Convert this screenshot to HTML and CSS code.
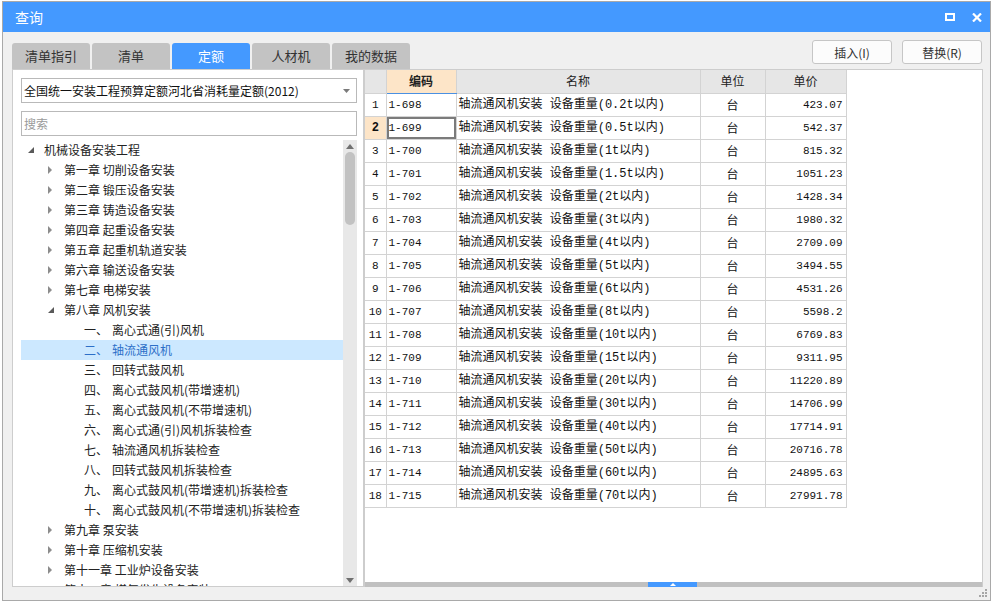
FILE: index.html
```html
<!DOCTYPE html>
<html lang="zh-CN">
<head>
<meta charset="utf-8">
<title>查询</title>
<link rel="stylesheet" href="styles.css">
</head>
<body>
<div class="dialog">
  <div class="titlebar">
    <span class="title">查询</span>
    <div class="winbtns">
      <svg width="10" height="8" viewBox="0 0 10 8"><rect x="1" y="1" width="8" height="6" fill="none" stroke="#fff" stroke-width="2"/></svg>
      <svg width="10" height="9" viewBox="0 0 10 9"><path d="M1 0.5 L9 8.5 M9 0.5 L1 8.5" stroke="#fff" stroke-width="2.2"/></svg>
    </div>
  </div>
  <div class="toolbar">
    <div class="tabs">
      <div class="tab">清单指引</div>
      <div class="tab">清单</div>
      <div class="tab active">定额</div>
      <div class="tab">人材机</div>
      <div class="tab">我的数据</div>
    </div>
    <div class="actions">
      <button class="btn">插入(I)</button>
      <button class="btn">替换(R)</button>
    </div>
  </div>
  <div class="main">
    <div class="leftpane">
      <div class="select">
        <span>全国统一安装工程预算定额河北省消耗量定额(2012)</span>
        <svg width="7" height="4" viewBox="0 0 7 4"><path d="M0 0 L7 0 L3.5 4 Z" fill="#7a7a7a"/></svg>
      </div>
      <div class="search">搜索</div>
      <div class="treewrap">
        <div class="tree">
          <div class="node l0"><span class="arr"><svg width="6" height="6" viewBox="0 0 6 6"><path d="M6 0 L6 6 L0 6 Z" fill="#5a5a5a"/></svg></span>机械设备安装工程</div>
          <div class="node l1"><span class="arr"><svg width="4" height="8" viewBox="0 0 4 8"><path d="M0 0 L4 4 L0 8 Z" fill="#8c8c8c"/></svg></span>第一章 切削设备安装</div>
          <div class="node l1"><span class="arr"><svg width="4" height="8" viewBox="0 0 4 8"><path d="M0 0 L4 4 L0 8 Z" fill="#8c8c8c"/></svg></span>第二章 锻压设备安装</div>
          <div class="node l1"><span class="arr"><svg width="4" height="8" viewBox="0 0 4 8"><path d="M0 0 L4 4 L0 8 Z" fill="#8c8c8c"/></svg></span>第三章 铸造设备安装</div>
          <div class="node l1"><span class="arr"><svg width="4" height="8" viewBox="0 0 4 8"><path d="M0 0 L4 4 L0 8 Z" fill="#8c8c8c"/></svg></span>第四章 起重设备安装</div>
          <div class="node l1"><span class="arr"><svg width="4" height="8" viewBox="0 0 4 8"><path d="M0 0 L4 4 L0 8 Z" fill="#8c8c8c"/></svg></span>第五章 起重机轨道安装</div>
          <div class="node l1"><span class="arr"><svg width="4" height="8" viewBox="0 0 4 8"><path d="M0 0 L4 4 L0 8 Z" fill="#8c8c8c"/></svg></span>第六章 输送设备安装</div>
          <div class="node l1"><span class="arr"><svg width="4" height="8" viewBox="0 0 4 8"><path d="M0 0 L4 4 L0 8 Z" fill="#8c8c8c"/></svg></span>第七章 电梯安装</div>
          <div class="node l1"><span class="arr"><svg width="6" height="6" viewBox="0 0 6 6"><path d="M6 0 L6 6 L0 6 Z" fill="#5a5a5a"/></svg></span>第八章 风机安装</div>
          <div class="node l2"><span class="num">一、</span>离心式通(引)风机</div>
          <div class="node l2 sel"><span class="num">二、</span>轴流通风机</div>
          <div class="node l2"><span class="num">三、</span>回转式鼓风机</div>
          <div class="node l2"><span class="num">四、</span>离心式鼓风机(带增速机)</div>
          <div class="node l2"><span class="num">五、</span>离心式鼓风机(不带增速机)</div>
          <div class="node l2"><span class="num">六、</span>离心式通(引)风机拆装检查</div>
          <div class="node l2"><span class="num">七、</span>轴流通风机拆装检查</div>
          <div class="node l2"><span class="num">八、</span>回转式鼓风机拆装检查</div>
          <div class="node l2"><span class="num">九、</span>离心式鼓风机(带增速机)拆装检查</div>
          <div class="node l2"><span class="num">十、</span>离心式鼓风机(不带增速机)拆装检查</div>
          <div class="node l1"><span class="arr"><svg width="4" height="8" viewBox="0 0 4 8"><path d="M0 0 L4 4 L0 8 Z" fill="#8c8c8c"/></svg></span>第九章 泵安装</div>
          <div class="node l1"><span class="arr"><svg width="4" height="8" viewBox="0 0 4 8"><path d="M0 0 L4 4 L0 8 Z" fill="#8c8c8c"/></svg></span>第十章 压缩机安装</div>
          <div class="node l1"><span class="arr"><svg width="4" height="8" viewBox="0 0 4 8"><path d="M0 0 L4 4 L0 8 Z" fill="#8c8c8c"/></svg></span>第十一章 工业炉设备安装</div>
          <div class="node l1"><span class="arr"><svg width="4" height="8" viewBox="0 0 4 8"><path d="M0 0 L4 4 L0 8 Z" fill="#8c8c8c"/></svg></span>第十二章 煤气发生设备安装</div>
        </div>
        <div class="vscroll">
          <svg class="varrow" width="8" height="5" viewBox="0 0 8 5"><path d="M0 5 L4 0 L8 5 Z" fill="#707070"/></svg>
          <div class="vthumb"></div>
          <div class="vfill"></div>
          <svg class="varrow" width="8" height="5" viewBox="0 0 8 5"><path d="M0 0 L8 0 L4 5 Z" fill="#707070"/></svg>
        </div>
      </div>
    </div>
    <div class="rightpane">
      <table class="grid">
        <colgroup><col class="c0"><col class="c1"><col class="c2"><col class="c3"><col class="c4"></colgroup>
        <thead>
          <tr><th class="rn"></th><th class="hl">编码</th><th>名称</th><th>单位</th><th>单价</th></tr>
        </thead>
        <tbody>
          <tr><td class="rn">1</td><td class="code">1-698</td><td class="name">轴流通风机安装 设备重量(0.2t以内)</td><td class="unit">台</td><td class="price">423.07</td></tr>
          <tr class="cur"><td class="rn">2</td><td class="code selcell">1-699</td><td class="name">轴流通风机安装 设备重量(0.5t以内)</td><td class="unit">台</td><td class="price">542.37</td></tr>
          <tr><td class="rn">3</td><td class="code">1-700</td><td class="name">轴流通风机安装 设备重量(1t以内)</td><td class="unit">台</td><td class="price">815.32</td></tr>
          <tr><td class="rn">4</td><td class="code">1-701</td><td class="name">轴流通风机安装 设备重量(1.5t以内)</td><td class="unit">台</td><td class="price">1051.23</td></tr>
          <tr><td class="rn">5</td><td class="code">1-702</td><td class="name">轴流通风机安装 设备重量(2t以内)</td><td class="unit">台</td><td class="price">1428.34</td></tr>
          <tr><td class="rn">6</td><td class="code">1-703</td><td class="name">轴流通风机安装 设备重量(3t以内)</td><td class="unit">台</td><td class="price">1980.32</td></tr>
          <tr><td class="rn">7</td><td class="code">1-704</td><td class="name">轴流通风机安装 设备重量(4t以内)</td><td class="unit">台</td><td class="price">2709.09</td></tr>
          <tr><td class="rn">8</td><td class="code">1-705</td><td class="name">轴流通风机安装 设备重量(5t以内)</td><td class="unit">台</td><td class="price">3494.55</td></tr>
          <tr><td class="rn">9</td><td class="code">1-706</td><td class="name">轴流通风机安装 设备重量(6t以内)</td><td class="unit">台</td><td class="price">4531.26</td></tr>
          <tr><td class="rn">10</td><td class="code">1-707</td><td class="name">轴流通风机安装 设备重量(8t以内)</td><td class="unit">台</td><td class="price">5598.2</td></tr>
          <tr><td class="rn">11</td><td class="code">1-708</td><td class="name">轴流通风机安装 设备重量(10t以内)</td><td class="unit">台</td><td class="price">6769.83</td></tr>
          <tr><td class="rn">12</td><td class="code">1-709</td><td class="name">轴流通风机安装 设备重量(15t以内)</td><td class="unit">台</td><td class="price">9311.95</td></tr>
          <tr><td class="rn">13</td><td class="code">1-710</td><td class="name">轴流通风机安装 设备重量(20t以内)</td><td class="unit">台</td><td class="price">11220.89</td></tr>
          <tr><td class="rn">14</td><td class="code">1-711</td><td class="name">轴流通风机安装 设备重量(30t以内)</td><td class="unit">台</td><td class="price">14706.99</td></tr>
          <tr><td class="rn">15</td><td class="code">1-712</td><td class="name">轴流通风机安装 设备重量(40t以内)</td><td class="unit">台</td><td class="price">17714.91</td></tr>
          <tr><td class="rn">16</td><td class="code">1-713</td><td class="name">轴流通风机安装 设备重量(50t以内)</td><td class="unit">台</td><td class="price">20716.78</td></tr>
          <tr><td class="rn">17</td><td class="code">1-714</td><td class="name">轴流通风机安装 设备重量(60t以内)</td><td class="unit">台</td><td class="price">24895.63</td></tr>
          <tr><td class="rn">18</td><td class="code">1-715</td><td class="name">轴流通风机安装 设备重量(70t以内)</td><td class="unit">台</td><td class="price">27991.78</td></tr>
        </tbody>
      </table>
      <div class="hscroll">
        <div class="hthumb"><svg width="6" height="3" viewBox="0 0 6 3"><path d="M0 3 L3 0 L6 3 Z" fill="#fff"/></svg></div>
      </div>
    </div>
  </div>
  <div class="footer">
    <svg width="9" height="9" viewBox="0 0 9 9" fill="#a6a6a6"><rect x="6" y="0" width="2" height="2"/><rect x="3" y="3" width="2" height="2"/><rect x="6" y="3" width="2" height="2"/><rect x="0" y="6" width="2" height="2"/><rect x="3" y="6" width="2" height="2"/><rect x="6" y="6" width="2" height="2"/></svg>
  </div>
</div>
</body>
</html>
```
FILE: styles.css
```css
* { box-sizing: border-box; }
html, body { margin: 0; padding: 0; }
body {
  background: #ffffff;
  font-family: "Noto Sans CJK SC", "Microsoft YaHei", sans-serif;
  font-size: 12px;
  color: #222;
}
.dialog {
  margin: 1px 0 0 2px;
  width: 989px;
  height: 600px;
  border: 1px solid #a9a9a9;
  background: #f0f0f0;
  display: flex;
  flex-direction: column;
}
.titlebar {
  height: 30px;
  flex: none;
  background: #4499ff;
  color: #fff;
  display: flex;
  align-items: center;
  justify-content: space-between;
  padding: 0 8px 0 12px;
}
.title { font-size: 14px; line-height: 16px; }
.winbtns { display: flex; align-items: center; gap: 17px; }
.winbtns svg { display: block; }

.toolbar {
  height: 37px;
  flex: none;
  display: flex;
  justify-content: space-between;
  padding: 0 8px 0 9px;
}
.tabs { display: flex; align-items: flex-end; gap: 2px; }
.tab {
  width: 78px;
  height: 26px;
  background: #c3c3c3;
  border-radius: 3px 3px 0 0;
  color: #333;
  font-size: 13px;
  line-height: 26px;
  text-align: center;
}
.tab.active { background: #4499ff; color: #fff; }
.actions { display: flex; gap: 10px; padding-top: 8px; }
.btn {
  width: 80px;
  height: 24px;
  padding: 0;
  border: 1px solid #c6c6c6;
  border-radius: 3px;
  background: #fcfcfc;
  font-family: "Noto Sans CJK SC", sans-serif;
  font-size: 12px;
  color: #333;
}

.main {
  height: 518px;
  flex: none;
  display: flex;
  padding: 0 7px 0 9px;
}
.leftpane {
  width: 352px;
  flex: none;
  background: #fff;
  border: 1px solid #cdcdcd;
  padding: 8px 6px 0 8px;
  display: flex;
  flex-direction: column;
}
.select {
  height: 25px;
  border: 1px solid #b9b9b9;
  display: flex;
  align-items: center;
  justify-content: space-between;
  padding: 0 6px 0 2px;
  font-size: 12px;
  color: #111;
  flex: none;
}
.search {
  margin-top: 8px;
  height: 25px;
  border: 1px solid #b9b9b9;
  padding-left: 2px;
  line-height: 23px;
  color: #9a9a9a;
  flex: none;
}
.treewrap {
  margin-top: 4px;
  flex: 1;
  display: flex;
  min-height: 0;
}
.tree { flex: 1; overflow: hidden; }
.node {
  height: 20px;
  display: flex;
  align-items: center;
  white-space: nowrap;
  line-height: 20px;
  color: #222;
}
.node.l0 { padding-left: 7px; }
.node.l1 { padding-left: 27px; }
.node.l2 { padding-left: 63px; }
.arr { width: 16px; flex: none; display: flex; align-items: center; }
.arr svg { display: block; }
.num { width: 28px; flex: none; }
.node.sel { background: #cce8ff; color: #2d6fc8; }

.vscroll {
  width: 14px;
  flex: none;
  background: #e8e8e8;
  display: flex;
  flex-direction: column;
  align-items: center;
  padding: 4px 0 3px;
}
.varrow { display: block; flex: none; }
.vthumb {
  margin-top: 3px;
  width: 10px;
  height: 73px;
  border-radius: 5px;
  background: #c2c2c2;
  flex: none;
}
.vfill { flex: 1; }

.rightpane {
  width: 619px;
  flex: none;
  background: #fff;
  border: 1px solid #cdcdcd;
  border-bottom: none;
  display: flex;
  flex-direction: column;
}
.grid {
  border-collapse: collapse;
  table-layout: fixed;
  width: 481px;
  font-size: 12px;
}
.c0 { width: 21px; }
.c1 { width: 70px; }
.c2 { width: 244px; }
.c3 { width: 65px; }
.c4 { width: 81px; }
.grid tr { height: 23px; }
.grid th, .grid td {
  border: 1px solid #d3d3d3;
  padding: 0;
  line-height: 20px;
  white-space: nowrap;
  overflow: hidden;
}
.grid th {
  border-top: none;
  background: #e6e6e6;
  font-weight: normal;
  color: #222;
  text-align: center;
}
.grid tr > :first-child { border-left: none; }
.grid th.hl {
  background: #fde5c8;
  font-weight: bold;
  border-bottom: 1px solid #4a90e2;
}
.grid td { color: #111; }
.grid td.rn {
  text-align: center;
  font-family: "Liberation Mono", monospace;
  font-size: 11px;
}
.grid tr.cur td.rn { background: #fde5c8; font-weight: bold; font-size: 12px; }
.grid td.code {
  padding-left: 2px;
  font-family: "Liberation Mono", monospace;
  font-size: 11px;
}
.grid td.selcell {
  box-shadow: inset 0 0 0 2px #7b7b7b;
  border-left: 1px solid #3d8ff0;
}
.grid td.name {
  padding-left: 2px;
  font-family: "Liberation Mono", "Noto Sans CJK SC", monospace;
}
.grid td.unit { text-align: center; }
.grid td.price {
  text-align: right;
  padding-right: 3px;
  font-family: "Liberation Mono", monospace;
  font-size: 11px;
}
.hscroll {
  margin-top: auto;
  height: 5px;
  background: #c0c0c0;
  padding-left: 283px;
  display: flex;
}
.hthumb {
  width: 49px;
  height: 5px;
  background: #4499ff;
  display: flex;
  align-items: center;
  justify-content: center;
}
.hthumb svg { display: block; }
.footer {
  flex: 1;
  display: flex;
  justify-content: flex-end;
  align-items: flex-end;
  padding: 0 2px 2px 0;
}
.footer svg { display: block; }
```
